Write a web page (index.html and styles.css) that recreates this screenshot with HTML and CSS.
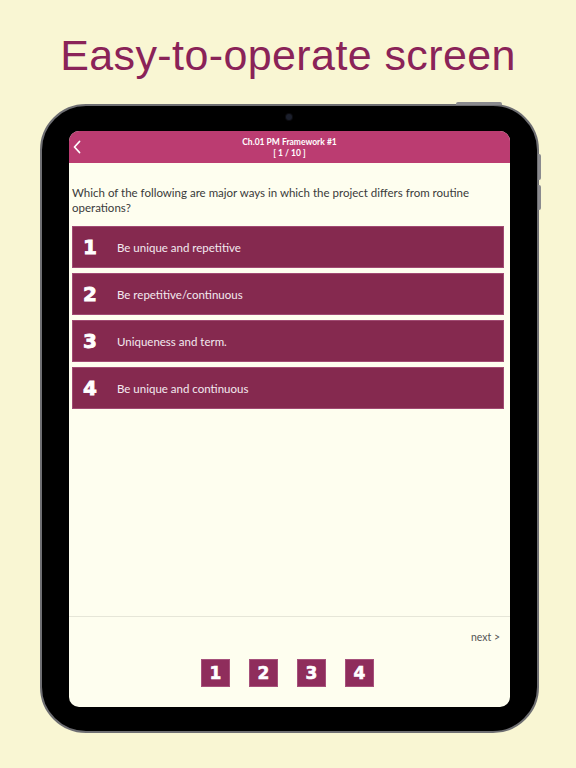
FILE: index.html
```html
<!DOCTYPE html>
<html>
<head>
<meta charset="utf-8">
<link rel="stylesheet" href="styles.css">
</head>
<body>
<div class="page">
  <h1 class="title">Easy-to-operate screen</h1>
  <div class="tablet">
    <span class="hw hw-top"></span>
    <span class="hw hw-side1"></span>
    <span class="hw hw-side2"></span>
    <span class="camera"></span>
    <div class="screen">
      <div class="header">
        <svg class="back" width="10" height="14" viewBox="0 0 10 14"><path d="M7.5 1.5 L2.5 7 L7.5 12.5" fill="none" stroke="#fff" stroke-width="1.8" stroke-linecap="round" stroke-linejoin="round"/></svg>
        <div class="header-title">Ch.01 PM Framework #1<br>[ 1 / 10 ]</div>
      </div>
      <div class="content">
        <p class="question">Which of the following are major ways in which the project differs from routine operations?</p>
        <div class="answers">
          <div class="answer"><span class="num">1</span><span class="atext">Be unique and repetitive</span></div>
          <div class="answer"><span class="num">2</span><span class="atext">Be repetitive/continuous</span></div>
          <div class="answer"><span class="num">3</span><span class="atext">Uniqueness and term.</span></div>
          <div class="answer"><span class="num">4</span><span class="atext">Be unique and continuous</span></div>
        </div>
      </div>
      <div class="footer">
        <div class="next">next &gt;</div>
        <div class="keys">
          <span class="key">1</span>
          <span class="key">2</span>
          <span class="key">3</span>
          <span class="key">4</span>
        </div>
      </div>
    </div>
  </div>
</div>
</body>
</html>
```

FILE: styles.css
```css
html, body {
  margin: 0;
  padding: 0;
  background: #f9f6d3;
}
.page {
  width: 576px;
  height: 768px;
  overflow: hidden;
  display: flex;
  flex-direction: column;
}
.title {
  margin: 28px 0 0 0;
  height: 52px;
  line-height: 54px;
  text-align: center;
  font-family: "Liberation Sans", Arial, sans-serif;
  font-weight: normal;
  font-size: 43px;
  color: #8a2358;
  letter-spacing: 0.4px;
}
.tablet {
  position: relative;
  margin: 24px 0 0 40px;
  width: 499px;
  height: 629px;
  box-sizing: border-box;
  background: #000;
  border: 2px solid #6e6e72;
  border-radius: 46px;
  padding: 25px 27px 24px 27px;
  display: flex;
}
.hw {
  position: absolute;
  background: #8a8a8e;
}
.hw-top {
  top: -4px;
  left: 414px;
  width: 46px;
  height: 3px;
  border-radius: 2px 2px 0 0;
}
.hw-side1 {
  right: -4px;
  top: 48px;
  width: 3px;
  height: 26px;
  border-radius: 0 2px 2px 0;
}
.hw-side2 {
  right: -4px;
  top: 79px;
  width: 3px;
  height: 25px;
  border-radius: 0 2px 2px 0;
}
.camera {
  position: absolute;
  top: 8px;
  left: 244px;
  width: 6px;
  height: 6px;
  border-radius: 50%;
  background: #1b1f2c;
  box-shadow: 0 0 0 1px #0c0c10;
}
.screen {
  flex: 1;
  background: #fefeef;
  border-radius: 10px;
  overflow: hidden;
  display: flex;
  flex-direction: column;
  font-family: "Lato", "Open Sans", sans-serif;
}
.header {
  position: relative;
  height: 32px;
  background: #bb3c71;
  display: flex;
  align-items: center;
  justify-content: center;
}
.back {
  position: absolute;
  left: 3px;
  top: 9px;
}
.header-title {
  color: #fff;
  font-size: 8.5px;
  font-weight: bold;
  line-height: 11px;
  text-align: center;
  margin-top: 1px;
}
.content {
  flex: 1;
  padding: 0 6px 0 3px;
}
.question {
  margin: 22px 0 0 0;
  font-size: 11.5px;
  line-height: 15px;
  color: #3a3a3a;
}
.answers {
  margin-top: 11px;
  display: flex;
  flex-direction: column;
  gap: 5px;
}
.answer {
  height: 40px;
  background: #85294f;
  border: 1px solid #a04a72;
  display: flex;
  align-items: center;
}
.num {
  width: 44px;
  padding-left: 10px;
  box-sizing: border-box;
  color: #fff;
  font-family: "DejaVu Sans", sans-serif;
  font-weight: bold;
  font-size: 20px;
  line-height: 1;
  -webkit-text-stroke: 0.8px #fff;
}
.atext {
  color: #f3e9ef;
  font-size: 11.5px;
}
.footer {
  height: 90px;
  border-top: 1px solid #e6e6d8;
  display: flex;
  flex-direction: column;
}
.next {
  align-self: flex-end;
  margin: 14px 10px 0 0;
  font-size: 10.5px;
  color: #555;
  line-height: 12px;
}
.keys {
  margin-top: 16px;
  display: flex;
  justify-content: center;
  gap: 19px;
  padding-right: 4px;
}
.key {
  width: 29px;
  height: 28px;
  box-sizing: border-box;
  background: #8f2d5c;
  border: 1px solid #a6517b;
  color: #fff;
  font-family: "DejaVu Sans", sans-serif;
  font-weight: bold;
  font-size: 17px;
  -webkit-text-stroke: 0.6px #fff;
  display: flex;
  align-items: center;
  justify-content: center;
}
```
